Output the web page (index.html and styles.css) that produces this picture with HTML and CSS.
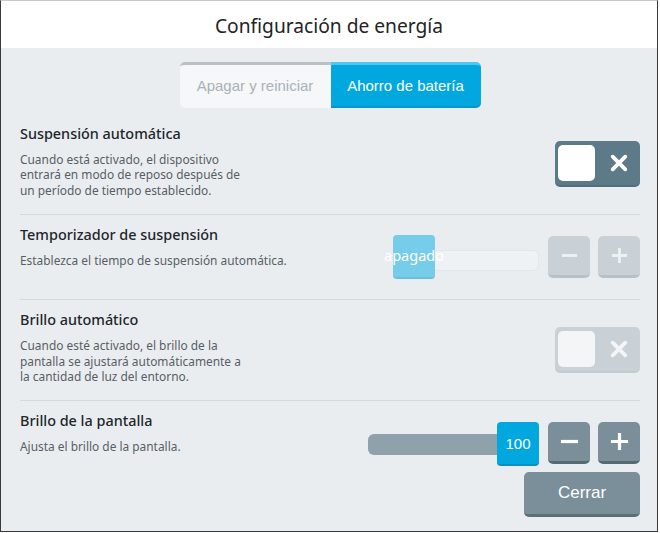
FILE: index.html
```html
<!DOCTYPE html>
<html lang="es">
<head>
<meta charset="utf-8">
<title>Configuración de energía</title>
<link rel="stylesheet" href="styles.css">
</head>
<body>
<div class="window">
  <header class="header">Configuración de energía</header>
  <main class="body">
    <div class="tabs">
      <button class="tab">Apagar y reiniciar</button>
      <button class="tab tab-active">Ahorro de batería</button>
    </div>

    <section class="row">
      <div class="text">
        <h2 class="label">Suspensión automática</h2>
        <p class="desc">Cuando está activado, el dispositivo<br>entrará en modo de reposo después de<br>un período de tiempo establecido.</p>
      </div>
      <div class="toggle">
        <span class="knob"></span>
        <svg class="x" viewBox="0 0 20 20" width="20" height="20"><path d="M3 3 L17 17 M17 3 L3 17" stroke="currentColor" stroke-width="4.2" stroke-linecap="round"/></svg>
      </div>
    </section>

    <section class="row row-tall">
      <div class="text text-top">
        <h2 class="label">Temporizador de suspensión</h2>
        <p class="desc">Establezca el tiempo de suspensión automática.</p>
      </div>
      <div class="control">
        <div class="slider slider-light">
          <div class="track"></div>
          <div class="thumb thumb-light">apagado</div>
        </div>
        <button class="step step-disabled"><svg viewBox="0 0 20 20" width="20" height="20"><path d="M2 10 H18" stroke="currentColor" stroke-width="3"/></svg></button>
        <button class="step step-disabled"><svg viewBox="0 0 20 20" width="20" height="20"><path d="M2 10 H18 M10 2 V18" stroke="currentColor" stroke-width="3"/></svg></button>
      </div>
    </section>

    <section class="row">
      <div class="text">
        <h2 class="label">Brillo automático</h2>
        <p class="desc">Cuando esté activado, el brillo de la<br>pantalla se ajustará automáticamente a<br>la cantidad de luz del entorno.</p>
      </div>
      <div class="toggle toggle-disabled">
        <span class="knob"></span>
        <svg class="x" viewBox="0 0 20 20" width="20" height="20"><path d="M3 3 L17 17 M17 3 L3 17" stroke="currentColor" stroke-width="4.2" stroke-linecap="round"/></svg>
      </div>
    </section>

    <section class="row row-last">
      <div class="text">
        <h2 class="label">Brillo de la pantalla</h2>
        <p class="desc">Ajusta el brillo de la pantalla.</p>
      </div>
      <div class="control control-top">
        <div class="slider slider-dark">
          <div class="track track-dark"></div>
          <div class="thumb thumb-blue">100</div>
        </div>
        <button class="step"><svg viewBox="0 0 20 20" width="20" height="20"><path d="M1 10 H19" stroke="currentColor" stroke-width="3.4"/></svg></button>
        <button class="step"><svg viewBox="0 0 20 20" width="20" height="20"><path d="M1 10 H19 M10 1 V19" stroke="currentColor" stroke-width="3.4"/></svg></button>
      </div>
    </section>

    <div class="footer">
      <button class="close">Cerrar</button>
    </div>
  </main>
</div>
</body>
</html>
```

FILE: styles.css
```css
* { box-sizing: border-box; margin: 0; padding: 0; }

html, body {
  background: #ffffff;
}

body {
  margin: 0;
  font-family: "Noto Sans", "Open Sans", sans-serif;
}

.window {
  width: 658px;
  height: 532px;
  border: 1px solid #3a3a3a;
  border-top-color: #c9c9c9;
  background: #eaedf0;
  display: flex;
  flex-direction: column;
}

.header {
  height: 47px;
  background: #ffffff;
  color: #1f2326;
  font-size: 19.2px;
  display: flex;
  align-items: center;
  justify-content: center;
  padding-top: 2px;
}

.body {
  flex: 1;
  padding: 14px 17px 0 19px;
  display: flex;
  flex-direction: column;
}

.tabs {
  display: flex;
  justify-content: center;
  margin-bottom: 6px;
}

.tab {
  height: 46px;
  width: 151px;
  border: none;
  border-top: 3px solid #b8c1c7;
  background: #f5f7f9;
  color: #a8b2b9;
  font-family: "Liberation Sans", Arial, sans-serif;
  font-size: 15px;
  border-radius: 5px 0 0 5px;
  padding-bottom: 2px;
}

.tab-active {
  width: 150px;
  border-top-color: #4fc6ec;
  border-bottom: 2px solid #0896c8;
  background: #00a8df;
  color: #ffffff;
  border-radius: 0 5px 5px 0;
  padding-bottom: 1px;
}

.row {
  display: flex;
  align-items: center;
  justify-content: space-between;
  padding: 9px 0;
  border-bottom: 1px solid #d3d9de;
}

.row-tall {
  min-height: 85px;
}

.text-top {
  align-self: flex-start;
}

.row-last {
  border-bottom: none;
  align-items: flex-start;
  padding-bottom: 8px;
}

.text {
  padding-bottom: 7px;
}

.label {
  font-size: 14.4px;
  font-weight: 500;
  line-height: 22px;
  color: #202629;
}

.desc {
  margin-top: 7px;
  font-size: 11.9px;
  line-height: 15.4px;
  color: #575f64;
}

.toggle {
  width: 85px;
  height: 46px;
  border-radius: 5px;
  background: #5c7a87;
  border-bottom: 2px solid #51707d;
  display: flex;
  align-items: center;
  padding: 0 0 0 3px;
  color: #ffffff;
}

.toggle .knob {
  width: 37px;
  height: 36px;
  border-radius: 5px;
  background: #ffffff;
}

.toggle .x {
  margin-left: 15px;
  width: 18px;
  height: 18px;
}

.toggle-disabled {
  background: #c9d1d6;
  border-bottom-color: #c2cbd0;
  color: #f3f5f7;
}

.toggle-disabled .knob {
  background: #f3f5f7;
}

.control {
  display: flex;
  align-items: center;
  gap: 8px;
}

.control-top {
  margin-top: 12px;
}

.slider {
  position: relative;
  display: flex;
  align-items: center;
  margin-right: 1px;
}

.slider-light {
  width: 146px;
}

.slider-dark {
  width: 171px;
}

.track {
  height: 21px;
  width: 100%;
  border-radius: 6px;
  background: #eff2f5;
  border: 1px solid #e1e6ea;
  margin-top: 6px;
}

.track-dark {
  height: 21px;
  background: #8fa2ab;
  border: none;
  margin-top: 2px;
}

.thumb {
  position: absolute;
  top: 50%;
  width: 42px;
  height: 44px;
  transform: translateY(-50%);
  border-radius: 4px;
  color: #ffffff;
  display: flex;
  align-items: center;
  justify-content: center;
  white-space: nowrap;
}

.thumb-light {
  left: 0;
  background: #75cdea;
  border-bottom: 2px solid #6bbfdb;
  font-family: "Noto Sans", sans-serif;
  font-size: 14.5px;
  padding-bottom: 2px;
}

.thumb-blue {
  right: 0;
  background: #00a8df;
  border-bottom: 2px solid #0a8fbf;
  font-family: "Liberation Sans", Arial, sans-serif;
  font-size: 15px;
  top: calc(50% + 1px);
}

.step {
  width: 42px;
  height: 42px;
  border: none;
  border-radius: 5px;
  background: #7a8f99;
  border-bottom: 3px solid #566a74;
  color: #ffffff;
  display: flex;
  align-items: center;
  justify-content: center;
}

.step svg {
  width: 19px;
  height: 19px;
}

.step-disabled {
  background: #c9d1d6;
  border-bottom-color: #b7c1c7;
  color: #eef1f3;
}

.footer {
  display: flex;
  justify-content: flex-end;
}

.close {
  width: 116px;
  height: 45px;
  border: none;
  border-radius: 5px;
  background: #7a8f99;
  border-bottom: 3px solid #5b6f79;
  color: #ffffff;
  font-family: "Liberation Sans", Arial, sans-serif;
  font-size: 17px;
}
```
